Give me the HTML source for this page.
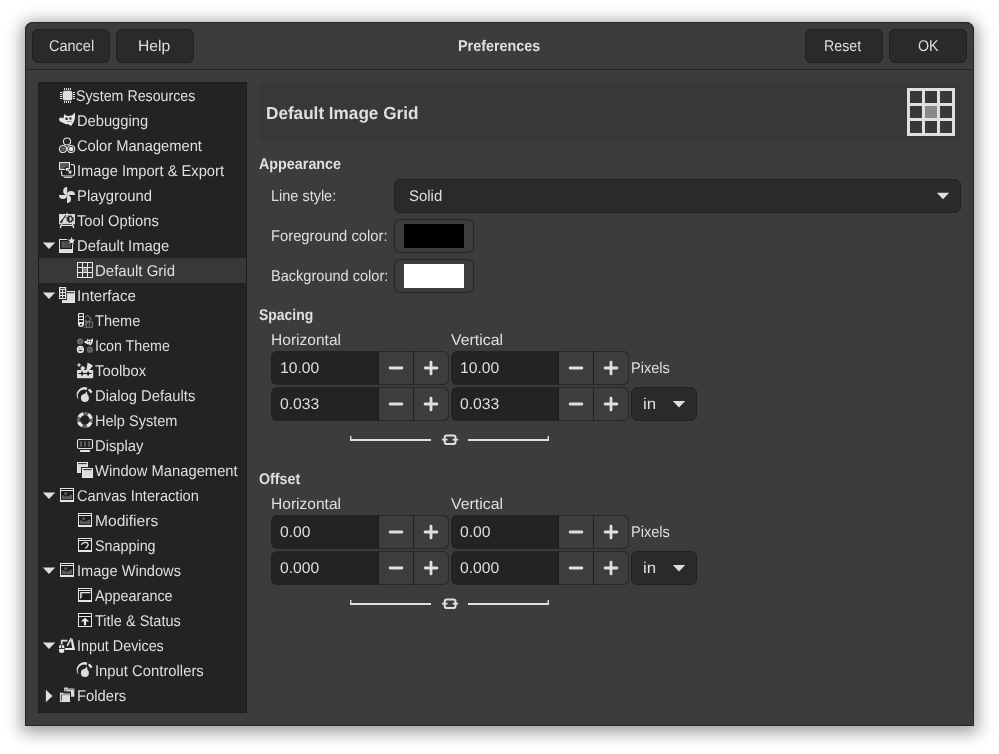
<!DOCTYPE html>
<html lang="en"><head><meta charset="utf-8"><title>Preferences</title>
<style>
html,body{margin:0;padding:0;background:#fff;}
body{width:999px;height:754px;position:relative;overflow:hidden;font-family:"Liberation Sans",sans-serif;font-size:15.5px;text-rendering:geometricPrecision;color:#dfdfdf;}
.a{position:absolute;box-sizing:border-box;}
.t{position:absolute;white-space:nowrap;transform-origin:0 0;line-height:20px;height:20px;color:#dfdfdf;}
#win{left:25px;top:22px;width:949px;height:704px;background:#3c3c3c;border-radius:8px 8px 0 0;box-shadow:0 3px 16px 4px rgba(0,0,0,.36);}
#hdr{left:25px;top:22px;width:949px;height:48px;border-bottom:1px solid #242424;border-radius:8px 8px 0 0;background:#3c3c3c;}
#wb{left:25px;top:22px;width:949px;height:704px;border:1px solid #262626;border-radius:8px 8px 0 0;}
.btn{background:#2a2a2a;border:1px solid #202020;border-radius:6px;}
#side{left:38px;top:82px;width:209px;height:631px;background:#232323;border:1px solid #1d1d1d;}
#sel{left:39px;top:258px;width:207px;height:25px;background:#383838;}
#tbox{left:259px;top:82px;width:702px;height:60px;background:#383838;border-radius:4px;}
.cbtn{background:#3d3d3d;border:1px solid #262626;border-radius:6px;}
.spin{background:#232323;border-radius:6px;}
.sb{background:#3d3d3d;border:1px solid #292929;border-left-color:#1f1f1f;}
</style></head>
<body>
<div id="win" class="a"></div><div id="hdr" class="a"></div><div id="wb" class="a"></div><div class="a btn" style="left:32px;top:29px;width:78px;height:34px"></div><div class="a btn" style="left:116px;top:29px;width:78px;height:34px"></div><div class="a btn" style="left:805px;top:29px;width:78px;height:34px"></div><div class="a btn" style="left:889px;top:29px;width:78px;height:34px"></div><div id="side" class="a"></div><div id="sel" class="a"></div><div id="tbox" class="a"></div><div class="a btn" style="left:394px;top:179px;width:567px;height:34px"></div><div class="a cbtn" style="left:394px;top:219px;width:80px;height:34px"></div><div class="a" style="left:404px;top:224px;width:60px;height:24px;background:#000"></div><div class="a cbtn" style="left:394px;top:259px;width:80px;height:34px"></div><div class="a" style="left:404px;top:264px;width:60px;height:24px;background:#fff"></div><div class="a spin" style="left:271px;top:351px;width:178px;height:34px"></div><div class="a sb" style="left:378px;top:351px;width:36px;height:34px;border-right:none"></div><div class="a sb" style="left:413px;top:351px;width:36px;height:34px;border-radius:0 6px 6px 0"></div><div class="a spin" style="left:451px;top:351px;width:178px;height:34px"></div><div class="a sb" style="left:558px;top:351px;width:36px;height:34px;border-right:none"></div><div class="a sb" style="left:593px;top:351px;width:36px;height:34px;border-radius:0 6px 6px 0"></div><div class="a spin" style="left:271px;top:387px;width:178px;height:34px"></div><div class="a sb" style="left:378px;top:387px;width:36px;height:34px;border-right:none"></div><div class="a sb" style="left:413px;top:387px;width:36px;height:34px;border-radius:0 6px 6px 0"></div><div class="a spin" style="left:451px;top:387px;width:178px;height:34px"></div><div class="a sb" style="left:558px;top:387px;width:36px;height:34px;border-right:none"></div><div class="a sb" style="left:593px;top:387px;width:36px;height:34px;border-radius:0 6px 6px 0"></div><div class="a btn" style="left:631px;top:387px;width:66px;height:34px"></div><div class="a spin" style="left:271px;top:515px;width:178px;height:34px"></div><div class="a sb" style="left:378px;top:515px;width:36px;height:34px;border-right:none"></div><div class="a sb" style="left:413px;top:515px;width:36px;height:34px;border-radius:0 6px 6px 0"></div><div class="a spin" style="left:451px;top:515px;width:178px;height:34px"></div><div class="a sb" style="left:558px;top:515px;width:36px;height:34px;border-right:none"></div><div class="a sb" style="left:593px;top:515px;width:36px;height:34px;border-radius:0 6px 6px 0"></div><div class="a spin" style="left:271px;top:551px;width:178px;height:34px"></div><div class="a sb" style="left:378px;top:551px;width:36px;height:34px;border-right:none"></div><div class="a sb" style="left:413px;top:551px;width:36px;height:34px;border-radius:0 6px 6px 0"></div><div class="a spin" style="left:451px;top:551px;width:178px;height:34px"></div><div class="a sb" style="left:558px;top:551px;width:36px;height:34px;border-right:none"></div><div class="a sb" style="left:593px;top:551px;width:36px;height:34px;border-radius:0 6px 6px 0"></div><div class="a btn" style="left:631px;top:551px;width:66px;height:34px"></div>
<svg class="a" style="left:0;top:0" width="999" height="754" viewBox="0 0 999 754">
<g fill="#dfdfdf"><rect x="907" y="88" width="3" height="48"/><rect x="907" y="88" width="48" height="3"/><rect x="922" y="88" width="3" height="48"/><rect x="907" y="103" width="48" height="3"/><rect x="937" y="88" width="3" height="48"/><rect x="907" y="118" width="48" height="3"/><rect x="952" y="88" width="3" height="48"/><rect x="907" y="133" width="48" height="3"/></g><rect x="925" y="106" width="12" height="12" fill="#888"/><path d="M936.8 192.7H949.2L943 199.3Z" fill="#dfdfdf"/><path d="M672.8 400.9H685.2L679 407.5Z" fill="#dfdfdf"/><path d="M390.1 368H401.9M425.1 368H436.9M431 362.1V373.9" stroke="#dfdfdf" stroke-width="2.8" stroke-linecap="round" fill="none"/><path d="M570.1 368H581.9M605.1 368H616.9M611 362.1V373.9" stroke="#dfdfdf" stroke-width="2.8" stroke-linecap="round" fill="none"/><path d="M390.1 404H401.9M425.1 404H436.9M431 398.1V409.9" stroke="#dfdfdf" stroke-width="2.8" stroke-linecap="round" fill="none"/><path d="M570.1 404H581.9M605.1 404H616.9M611 398.1V409.9" stroke="#dfdfdf" stroke-width="2.8" stroke-linecap="round" fill="none"/><path d="M350 436H351.4V439H431V441H350ZM468 439H547.6V436H549V441H468Z" fill="#dfdfdf"/><rect x="444.7" y="435.4" width="10.8" height="8.6" rx="2.1" stroke="#dfdfdf" stroke-width="2" fill="none"/><path d="M442 439.7H447.5M452.7 439.7H458.2" stroke="#dfdfdf" stroke-width="1.8" fill="none"/><path d="M672.8 564.9000000000001H685.2L679 571.5Z" fill="#dfdfdf"/><path d="M390.1 532H401.9M425.1 532H436.9M431 526.1V537.9" stroke="#dfdfdf" stroke-width="2.8" stroke-linecap="round" fill="none"/><path d="M570.1 532H581.9M605.1 532H616.9M611 526.1V537.9" stroke="#dfdfdf" stroke-width="2.8" stroke-linecap="round" fill="none"/><path d="M390.1 568H401.9M425.1 568H436.9M431 562.1V573.9" stroke="#dfdfdf" stroke-width="2.8" stroke-linecap="round" fill="none"/><path d="M570.1 568H581.9M605.1 568H616.9M611 562.1V573.9" stroke="#dfdfdf" stroke-width="2.8" stroke-linecap="round" fill="none"/><path d="M350 600H351.4V603H431V605H350ZM468 603H547.6V600H549V605H468Z" fill="#dfdfdf"/><rect x="444.7" y="599.4" width="10.8" height="8.6" rx="2.1" stroke="#dfdfdf" stroke-width="2" fill="none"/><path d="M442 603.7H447.5M452.7 603.7H458.2" stroke="#dfdfdf" stroke-width="1.8" fill="none"/><path d="M42.8 242.45H55.2L49 249.05Z" fill="#dfdfdf"/><path d="M42.8 292.45H55.2L49 299.05Z" fill="#dfdfdf"/><path d="M42.8 492.45H55.2L49 499.05Z" fill="#dfdfdf"/><path d="M42.8 567.45H55.2L49 574.05Z" fill="#dfdfdf"/><path d="M42.8 642.45H55.2L49 649.05Z" fill="#dfdfdf"/><path d="M45.900000000000006 689.8V702.2L52.5 696.0Z" fill="#dfdfdf"/>
<g transform="translate(59,87)"><rect x="4" y="4" width="9" height="9" rx="1.6" fill="#dcdcdc" stroke="#e6e6e6" stroke-width="0.6"/><rect x="5" y="1" width="1" height="2" fill="#e6e6e6"/><rect x="5" y="14" width="1" height="2" fill="#e6e6e6"/><rect x="1" y="5" width="2" height="1" fill="#e6e6e6"/><rect x="14" y="5" width="2" height="1" fill="#e6e6e6"/><rect x="7" y="1" width="1" height="2" fill="#e6e6e6"/><rect x="7" y="14" width="1" height="2" fill="#e6e6e6"/><rect x="1" y="7" width="2" height="1" fill="#e6e6e6"/><rect x="14" y="7" width="2" height="1" fill="#e6e6e6"/><rect x="9" y="1" width="1" height="2" fill="#e6e6e6"/><rect x="9" y="14" width="1" height="2" fill="#e6e6e6"/><rect x="1" y="9" width="2" height="1" fill="#e6e6e6"/><rect x="14" y="9" width="2" height="1" fill="#e6e6e6"/><rect x="11" y="1" width="1" height="2" fill="#e6e6e6"/><rect x="11" y="14" width="1" height="2" fill="#e6e6e6"/><rect x="1" y="11" width="2" height="1" fill="#e6e6e6"/><rect x="14" y="11" width="2" height="1" fill="#e6e6e6"/></g>
<g transform="translate(59,112)"><path d="M5.3 1.4Q5.8 3.6 9.4 4Q13.6 4 15.7 0.5C16.6 5 15.8 10 11.7 14.2L10.3 12.6Q6 12.4 2.8 10.3C-0.3 9.8-0.8 6.1 2 5.6Q3.4 5.6 4.4 6.4Z" fill="#e6e6e6"/><ellipse cx="7.6" cy="6.7" rx="1.35" ry="1.2" fill="#232323"/><ellipse cx="11.6" cy="6.5" rx="1.35" ry="1.2" fill="#232323"/><circle cx="12.3" cy="6.6" r="0.55" fill="#e6e6e6"/><path d="M8 9.6H13" stroke="#777" stroke-width="0.7"/></g>
<g transform="translate(59,137)"><circle cx="8" cy="4.5" r="3.55" fill="none" stroke="#e6e6e6" stroke-width="1.1"/><circle cx="3.9" cy="12" r="3.55" fill="none" stroke="#e6e6e6" stroke-width="1.1"/><circle cx="3.9" cy="12" r="2.2" fill="#666"/><circle cx="12.1" cy="12" r="3.55" fill="none" stroke="#e6e6e6" stroke-width="1.1"/><circle cx="12.1" cy="12" r="2.2" fill="#e6e6e6"/><rect x="7.4" y="10.2" width="1.2" height="2.6" fill="#dcdcdc"/></g>
<g transform="translate(59,162)"><rect x="2.5" y="2.5" width="13" height="11.5" rx="2.2" fill="none" stroke="#e6e6e6" stroke-width="1.1"/><rect x="5" y="15.1" width="8" height="0.9" rx=".45" fill="#cfcfcf"/><rect x="-1" y="-1" width="12.8" height="9.8" fill="#232323"/><rect x="0.5" y="0.5" width="10" height="7" fill="#5a5a5a" stroke="#e6e6e6" stroke-width="1"/><path d="M6.3 5.3L13 11.6" stroke="#232323" stroke-width="3.2"/><path d="M8 7L11.5 10.4" stroke="#e6e6e6" stroke-width="1.3"/><path d="M7 6H10.4L7 9.4Z" fill="#e6e6e6"/><path d="M12.4 11.4H9L12.4 8Z" fill="#e6e6e6"/></g>
<g transform="translate(59,187)"><path d="M8.2 0A4 4 0 0 0 8.2 8Z" fill="#dcdcdc"/><path d="M8 8A4 4 0 0 1 16 8Z" fill="#dcdcdc"/><path d="M8 8A4 4 0 0 1 8 16Z" fill="#dcdcdc"/><path d="M0 8A4 4 0 0 0 8 8Z" fill="#dcdcdc"/></g>
<g transform="translate(59,212)"><path d="M7 2.2L8 0.4L9 2.2Z" fill="#dcdcdc"/><rect x="0.4" y="2.4" width="15.2" height="9.4" fill="#dcdcdc" stroke="#e6e6e6" stroke-width="0.8"/><path d="M2.7 12L1.2 16M13.3 12L14.8 16" stroke="#e6e6e6" stroke-width="1.4"/><path d="M3 13.5H13" stroke="#e6e6e6" stroke-width="1"/><path d="M1.6 10.2L7 3.4" stroke="#2a2a2a" stroke-width="1.1"/><path d="M1.2 10.7L3.8 8.6L2.9 10.3Z" fill="#2a2a2a" stroke="#2a2a2a" stroke-width=".8"/><circle cx="11" cy="7" r="3" fill="none" stroke="#2a2a2a" stroke-width="1.6" stroke-dasharray="1.55 0.8"/><circle cx="11" cy="7" r="2.9" fill="#2a2a2a"/><path d="M10.6 4.9V9.1A2.1 2.1 0 0 0 10.6 4.9Z" fill="#e6e6e6"/></g>
<g transform="translate(59,237)"><rect x="0.5" y="2.5" width="13" height="13" fill="#232323" stroke="#e6e6e6" stroke-width="1"/><rect x="1" y="12" width="12" height="3.2" fill="#dcdcdc"/><rect x="1.2" y="3.2" width="11.6" height="8.6" fill="#181818"/><rect x="2.3" y="4.3" width="9.5" height="6.5" fill="#555"/><path d="M5 4.3L8.2 10.8H9.6L6.4 4.3Z" fill="#444"/><polygon points="12.60,-1.30 14.13,1.80 17.55,2.29 15.07,4.70 15.66,8.11 12.60,6.50 9.54,8.11 10.13,4.70 7.65,2.29 11.07,1.80" fill="#232323"/><polygon points="12.60,0.00 13.63,2.48 16.31,2.69 14.26,4.44 14.89,7.06 12.60,5.65 10.31,7.06 10.94,4.44 8.89,2.69 11.57,2.48" fill="#e6e6e6"/></g>
<g transform="translate(77,262)"><g fill="#e6e6e6"><rect x="0" y="0" width="1" height="16"/><rect x="0" y="0" width="16" height="1"/><rect x="5" y="0" width="1" height="16"/><rect x="0" y="5" width="16" height="1"/><rect x="10" y="0" width="1" height="16"/><rect x="0" y="10" width="16" height="1"/><rect x="15" y="0" width="1" height="16"/><rect x="0" y="15" width="16" height="1"/></g><rect x="6" y="6" width="4" height="4" fill="#888"/></g>
<g transform="translate(59,287)"><rect x="3.5" y="4.5" width="12" height="11" fill="#dcdcdc" stroke="#e6e6e6" stroke-width="1"/><rect x="8" y="5.2" width="7" height="1" fill="#232323"/><rect x="-1" y="-1" width="9" height="14" fill="#232323"/><rect x="0" y="0" width="7.2" height="12" fill="#e6e6e6"/><rect x="1.2" y="1.2" width="4.8" height="0.9" fill="#232323"/><rect x="1.2" y="3.1" width="1.9" height="1.8" fill="#111"/><rect x="4.1" y="3.1" width="1.9" height="1.8" fill="#111"/><rect x="1.2" y="6.1" width="1.9" height="1.8" fill="#111"/><rect x="4.1" y="6.1" width="1.9" height="1.8" fill="#111"/><rect x="1.2" y="9.2" width="1.9" height="1.8" fill="#111"/><rect x="4.1" y="9.2" width="1.9" height="1.8" fill="#111"/></g>
<g transform="translate(77,312)"><g stroke="#777" stroke-width="1" fill="none"><g transform="rotate(45 4 13)"><rect x="1.5" y="1.5" width="5.4" height="11"/><path d="M1.5 6.4H7M1.5 8.6H7"/></g><rect x="5" y="9.9" width="10.4" height="5.4"/><path d="M9.4 9.9V15.3M12.4 9.9V15.3"/></g><path d="M0 0H8V12.5A4 4 0 0 1 0 12.5Z" fill="#232323"/><path d="M1 1.8A.8 .8 0 0 1 1.8 1H6.2A.8 .8 0 0 1 7 1.8V12A3 3 0 0 1 1 12Z" fill="#e6e6e6"/><rect x="2.1" y="2.2" width="3.8" height="1.8" fill="#111"/><rect x="2.1" y="5.2" width="3.8" height="1.8" fill="#111"/><rect x="2.1" y="8.2" width="3.8" height="1.8" fill="#111"/><rect x="3.1" y="11.8" width="1.8" height="1.8" fill="#2a2a2a"/></g>
<g transform="translate(77,337)"><circle cx="3.1" cy="4.5" r="2.9" fill="#7a7a7a"/><circle cx="3.1" cy="4.5" r="1.7" fill="#666"/><path d="M1.4 3.8H4.8" stroke="#444" stroke-width=".7"/><rect x="2.2" y="5.6" width="1.9" height="0.9" fill="#333"/><g transform="translate(7.2,0.6) scale(0.55,0.56)"><path d="M5.3 1.4Q5.8 3.6 9.4 4Q13.6 4 15.7 0.5C16.6 5 15.8 10 11.7 14.2L10.3 12.6Q6 12.4 2.8 10.3C-0.3 9.8-0.8 6.1 2 5.6Q3.4 5.6 4.4 6.4Z" fill="#e6e6e6"/><ellipse cx="7.6" cy="6.7" rx="1.35" ry="1.2" fill="#232323"/><ellipse cx="11.6" cy="6.5" rx="1.35" ry="1.2" fill="#232323"/><circle cx="12.3" cy="6.6" r="0.55" fill="#e6e6e6"/><path d="M8 9.6H13" stroke="#777" stroke-width="0.7"/></g><circle cx="3.4" cy="12.4" r="3.6" fill="#e6e6e6"/><path d="M1.2 13Q3.4 15.6 5.6 13Z" fill="#222"/><path d="M1.6 11.3H3M3.8 11.3H5.2" stroke="#555" stroke-width=".7"/><circle cx="12.9" cy="12.7" r="3.1" fill="#6a6a6a"/><path d="M11.2 12.3H14.6" stroke="#333" stroke-width=".9"/><path d="M11.8 14.2H14" stroke="#555" stroke-width=".6"/></g>
<g transform="translate(77,362)"><rect x="0" y="8" width="16.2" height="8.2" fill="#dcdcdc"/><path d="M1.5 11.5H14.5" stroke="#151515" stroke-width="1"/><path d="M5.1 9.4V13.6M11.1 9.4V13.6" stroke="#151515" stroke-width="1.6"/><rect x="0.6" y="1.6" width="2.8" height="2.8" transform="rotate(40 2 3)" fill="#ccc"/><path d="M5.6 3.8L8.3 6L6.8 8H4.4L3.3 6Z" fill="#dcdcdc"/><path d="M9.4 8L10.6 0.4L16 3.4L12.6 8Z" fill="#dcdcdc"/></g>
<g transform="translate(77,387)"><circle cx="7.9" cy="11" r="4" fill="#dcdcdc"/><path d="M6.6 7.9L10 4.2L10.4 8.2Z" fill="#dcdcdc"/><path d="M0.5 11.6A8 8 0 0 1 10.3 0.6L9.6 3.1A6.3 6.3 0 0 0 1.5 11.7Z" fill="#e6e6e6"/><path d="M12.2 1.4A8 8 0 0 1 15.6 4.9L13.4 6.2A5.6 5.6 0 0 0 11 3.6Z" fill="#e6e6e6"/></g>
<g transform="translate(77,662)"><circle cx="7.9" cy="11" r="4" fill="#dcdcdc"/><path d="M6.6 7.9L10 4.2L10.4 8.2Z" fill="#dcdcdc"/><path d="M0.5 11.6A8 8 0 0 1 10.3 0.6L9.6 3.1A6.3 6.3 0 0 0 1.5 11.7Z" fill="#e6e6e6"/><path d="M12.2 1.4A8 8 0 0 1 15.6 4.9L13.4 6.2A5.6 5.6 0 0 0 11 3.6Z" fill="#e6e6e6"/></g>
<g transform="translate(77,412)"><circle cx="7.9" cy="8" r="6.45" fill="none" stroke="#666" stroke-width="3.3"/><circle cx="7.9" cy="8" r="6.45" fill="none" stroke="#e6e6e6" stroke-width="3.3" stroke-dasharray="5.066 5.066" stroke-dashoffset="-2.533"/></g>
<g transform="translate(77,437)"><rect x="0.5" y="2.5" width="15" height="9" rx="1.6" fill="none" stroke="#e6e6e6" stroke-width="1.1"/><rect x="3" y="4.4" width="2" height="5.4" fill="#585858"/><rect x="7" y="4.4" width="2" height="5.4" fill="#585858"/><rect x="11" y="4.4" width="2" height="5.4" fill="#585858"/><rect x="3" y="13" width="10" height="2" rx=".4" fill="#e6e6e6"/></g>
<g transform="translate(77,462)"><rect x="0.5" y="0.5" width="10" height="10" fill="#dcdcdc" stroke="#e6e6e6" stroke-width="1"/><rect x="1.3" y="1.2" width="8.4" height="0.9" fill="#151515"/><rect x="4" y="5" width="13" height="12" fill="#232323"/><rect x="5.5" y="6.5" width="10" height="9" fill="#dcdcdc" stroke="#e6e6e6" stroke-width="1"/><rect x="6.3" y="7.2" width="8.4" height="0.9" fill="#151515"/></g>
<g transform="translate(59,487)"><rect x="1" y="1" width="14" height="14" fill="#e6e6e6"/><rect x="2" y="2" width="12" height="1" fill="#151515"/><rect x="2" y="4" width="12" height="9" fill="#1c1c1c"/><circle cx="6.6" cy="6.6" r="1.5" fill="#5a5a5a"/><path d="M2.8 12.3V8.4Q5.2 8.2 6.8 9.4Q8.5 10 10 8.8Q11.6 7.6 13.2 7.6V12.3Z" fill="#5a5a5a"/></g>
<g transform="translate(77,512)"><rect x="1" y="1" width="14" height="14" fill="#e6e6e6"/><rect x="2" y="2" width="12" height="1" fill="#151515"/><rect x="2" y="4" width="12" height="9" fill="#1c1c1c"/><circle cx="6.6" cy="6.6" r="1.5" fill="#5a5a5a"/><path d="M2.8 12.3V8.4Q5.2 8.2 6.8 9.4Q8.5 10 10 8.8Q11.6 7.6 13.2 7.6V12.3Z" fill="#5a5a5a"/></g>
<g transform="translate(59,562)"><rect x="1" y="1" width="14" height="14" fill="#e6e6e6"/><rect x="2" y="2" width="12" height="1" fill="#151515"/><rect x="2" y="4" width="12" height="9" fill="#1c1c1c"/><circle cx="6.6" cy="6.6" r="1.5" fill="#5a5a5a"/><path d="M2.8 12.3V8.4Q5.2 8.2 6.8 9.4Q8.5 10 10 8.8Q11.6 7.6 13.2 7.6V12.3Z" fill="#5a5a5a"/></g>
<g transform="translate(77,537)"><rect x="1" y="1" width="14" height="14" fill="#e6e6e6"/><rect x="2" y="2" width="12" height="1" fill="#151515"/><rect x="2" y="4" width="12" height="9" fill="#1c1c1c"/><path d="M4.4 7.4Q7.4 4.4 10.4 5.9Q12.6 8 8.6 11.2" fill="none" stroke="#e6e6e6" stroke-width="1.25" stroke-linecap="round"/></g>
<g transform="translate(77,587)"><rect x="1" y="1" width="14" height="14" fill="#e6e6e6"/><rect x="2" y="2" width="12" height="1" fill="#151515"/><rect x="2" y="4" width="12" height="9" fill="#1c1c1c"/><path d="M3.2 12.3V5H13.3V6.6H12.4V5.9H11.4V6.6H10.4V5.9H9.4V6.6H8.4V5.9H7.4V6.6H6.4V5.9H5.4V6.6H4.4V7.4H5.2V8.3H4.4V9.2H5.2V10.1H4.4V11L3.2 12.3Z" fill="#e6e6e6"/></g>
<g transform="translate(77,612)"><rect x="1" y="1" width="14" height="14" fill="#e6e6e6"/><rect x="2" y="2" width="12" height="2" fill="#111"/><rect x="2" y="5" width="12" height="9" fill="#1c1c1c"/><path d="M3.8 9.6L8 5.7L12.2 9.6H9.1V13.2H6.9V9.6Z" fill="#e6e6e6"/></g>
<g transform="translate(59,637)"><rect x="0" y="7.4" width="5.3" height="8.7" rx="2.5" fill="#e6e6e6"/><path d="M2.65 7.4V11.5M0 11.5H5.3" stroke="#232323" stroke-width="0.9"/><path d="M2.7 7V3.6H8.4" fill="none" stroke="#dcdcdc" stroke-width="1.7"/><path d="M6 11H13.2L11.9 3.4L13.5 1.4L16.1 13H6Z" fill="#e6e6e6"/><path d="M8.2 8.9L12.3 1.2" stroke="#e6e6e6" stroke-width="1.5"/></g>
<g transform="translate(59,687)"><path d="M5.2 0.6000000000000001H8.8V1.5H15.3V9.799999999999999H5.2Z" fill="#dcdcdc"/><rect x="6.2" y="2.2" width="9.1" height="0.9" fill="#888"/><rect x="6.2" y="2.8000000000000003" width="0.9" height="6" fill="#444"/><rect x="0" y="4.4" width="12" height="11.5" fill="#232323"/><path d="M0.9 5.7H4.5V6.6H11.0V14.899999999999999H0.9Z" fill="#dcdcdc"/><rect x="1.9" y="7.3" width="9.1" height="0.9" fill="#888"/><rect x="1.9" y="7.9" width="0.9" height="6" fill="#444"/></g>
</svg>
<div id="txt" class="a" style="left:0;top:0;width:999px;height:754px;will-change:transform">
<div class="t" style="left:48.81px;top:37px;transform:scaleX(0.9354);">Cancel</div><div class="t" style="left:138.40px;top:37px;transform:scaleX(1.0109);">Help</div><div class="t" style="left:458.07px;top:37px;transform:scaleX(0.9281);font-weight:700;">Preferences</div><div class="t" style="left:824.40px;top:37px;transform:scaleX(0.9165);">Reset</div><div class="t" style="left:917.88px;top:37px;transform:scaleX(0.9186);">OK</div><div class="t" style="left:76.43px;top:87px;transform:scaleX(0.9178);">System Resources</div><div class="t" style="left:76.57px;top:112px;transform:scaleX(0.9478);">Debugging</div><div class="t" style="left:76.90px;top:137px;transform:scaleX(0.9479);">Color Management</div><div class="t" style="left:76.89px;top:162px;transform:scaleX(0.9478);">Image Import &amp; Export</div><div class="t" style="left:76.56px;top:187px;transform:scaleX(0.9570);">Playground</div><div class="t" style="left:76.97px;top:212px;transform:scaleX(0.9493);">Tool Options</div><div class="t" style="left:76.56px;top:237px;transform:scaleX(0.9557);">Default Image</div><div class="t" style="left:94.54px;top:262px;transform:scaleX(0.9670);">Default Grid</div><div class="t" style="left:76.85px;top:287px;transform:scaleX(0.9777);">Interface</div><div class="t" style="left:94.97px;top:312px;transform:scaleX(0.9374);">Theme</div><div class="t" style="left:94.93px;top:337px;transform:scaleX(0.9169);">Icon Theme</div><div class="t" style="left:94.97px;top:362px;transform:scaleX(0.9554);">Toolbox</div><div class="t" style="left:94.56px;top:387px;transform:scaleX(0.9544);">Dialog Defaults</div><div class="t" style="left:94.58px;top:412px;transform:scaleX(0.9382);">Help System</div><div class="t" style="left:94.56px;top:437px;transform:scaleX(0.9537);">Display</div><div class="t" style="left:95.09px;top:462px;transform:scaleX(0.9516);">Window Management</div><div class="t" style="left:76.90px;top:487px;transform:scaleX(0.9431);">Canvas Interaction</div><div class="t" style="left:94.50px;top:512px;transform:scaleX(1.0046);">Modifiers</div><div class="t" style="left:94.83px;top:537px;transform:scaleX(0.9247);">Snapping</div><div class="t" style="left:76.90px;top:562px;transform:scaleX(0.9428);">Image Windows</div><div class="t" style="left:95.25px;top:587px;transform:scaleX(0.9284);">Appearance</div><div class="t" style="left:94.97px;top:612px;transform:scaleX(0.9366);">Title &amp; Status</div><div class="t" style="left:76.92px;top:637px;transform:scaleX(0.9238);">Input Devices</div><div class="t" style="left:94.88px;top:662px;transform:scaleX(0.9561);">Input Controllers</div><div class="t" style="left:76.56px;top:687px;transform:scaleX(0.9520);">Folders</div><div class="t" style="left:265.52px;top:103px;transform:scaleX(0.9794);font-weight:700;font-size:17.5px;">Default Image Grid</div><div class="t" style="left:259.11px;top:155px;transform:scaleX(0.9249);font-weight:700;">Appearance</div><div class="t" style="left:270.98px;top:187px;transform:scaleX(0.9341);">Line style:</div><div class="t" style="left:409.20px;top:187px;transform:scaleX(0.9650);">Solid</div><div class="t" style="left:270.96px;top:227px;transform:scaleX(0.9524);">Foreground color:</div><div class="t" style="left:270.98px;top:267px;transform:scaleX(0.9392);">Background color:</div><div class="t" style="left:259.00px;top:306px;transform:scaleX(0.8980);font-weight:700;">Spacing</div><div class="t" style="left:258.98px;top:470px;transform:scaleX(0.9214);font-weight:700;">Offset</div><div class="t" style="left:270.90px;top:331px;transform:scaleX(1.0039);">Horizontal</div><div class="t" style="left:451.05px;top:331px;transform:scaleX(1.0231);">Vertical</div><div class="t" style="left:630.97px;top:359px;transform:scaleX(0.9397);">Pixels</div><div class="t" style="left:642.51px;top:395px;transform:scaleX(1.0899);">in</div><div class="t" style="left:270.90px;top:495px;transform:scaleX(1.0039);">Horizontal</div><div class="t" style="left:451.05px;top:495px;transform:scaleX(1.0231);">Vertical</div><div class="t" style="left:630.97px;top:523px;transform:scaleX(0.9397);">Pixels</div><div class="t" style="left:642.51px;top:559px;transform:scaleX(1.0899);">in</div><div class="t" style="left:280.28px;top:359px;transform:scaleX(1.0098);">10.00</div><div class="t" style="left:460.28px;top:359px;transform:scaleX(1.0098);">10.00</div><div class="t" style="left:280.09px;top:395px;transform:scaleX(1.0142);">0.033</div><div class="t" style="left:460.09px;top:395px;transform:scaleX(1.0142);">0.033</div><div class="t" style="left:280.09px;top:523px;transform:scaleX(1.0125);">0.00</div><div class="t" style="left:460.09px;top:523px;transform:scaleX(1.0125);">0.00</div><div class="t" style="left:280.09px;top:559px;transform:scaleX(1.0095);">0.000</div><div class="t" style="left:460.09px;top:559px;transform:scaleX(1.0095);">0.000</div>
</div>
</body></html>
